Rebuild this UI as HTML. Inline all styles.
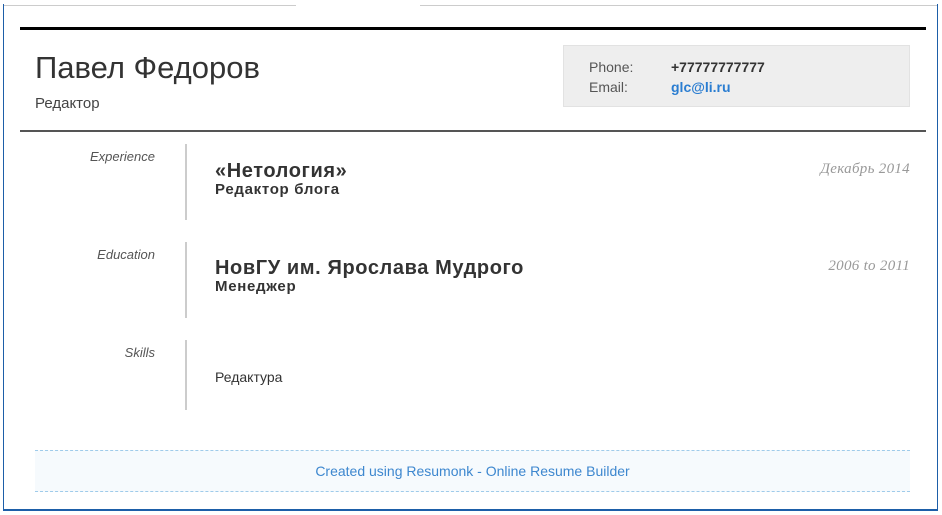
<!DOCTYPE html>
<html><head><meta charset="utf-8"><style>
*{margin:0;padding:0;box-sizing:border-box}
body{width:942px;height:515px;background:#fff;font-family:"Liberation Sans",sans-serif;position:relative;overflow:hidden}
.a{position:absolute;white-space:nowrap}
.frame{position:absolute;left:3px;top:4px;width:935px;height:507px;border-left:1px solid #1d5ea8;border-right:1px solid #1d5ea8;border-bottom:2px solid #1d5ea8}
.lab{font-style:italic;font-size:13px;color:#555;text-align:right;width:120px;left:35px}
.vl{position:absolute;left:185px;width:2px;background:#ccc}
.date{font-family:"Liberation Serif",serif;font-style:italic;font-size:15px;color:#999;right:32px;letter-spacing:0.3px}
.h{font-size:20px;font-weight:bold;color:#333;letter-spacing:0.6px}
.s{font-size:15px;font-weight:bold;color:#333;letter-spacing:0.7px}
</style></head><body>
<div class="frame"></div>
<div class="a" style="left:4px;top:5px;width:292px;height:1px;background:#ccc"></div>
<div class="a" style="left:420px;top:5px;width:517px;height:1px;background:#ccc"></div>
<div class="a" style="left:20px;top:27px;width:906px;height:3px;background:#000"></div>
<div class="a" style="left:35px;top:50px;font-size:31px;color:#333">Павел Федоров</div>
<div class="a" style="left:35px;top:95px;font-size:15px;color:#444">Редактор</div>
<div class="a" style="left:563px;top:45px;width:347px;height:62px;background:#eee;border:1px solid #e2e2e2"></div>
<div class="a" style="left:589px;top:59px;font-size:14px;color:#555">Phone:</div>
<div class="a" style="left:589px;top:79px;font-size:14px;color:#555">Email:</div>
<div class="a" style="left:671px;top:59px;font-size:14px;color:#333;font-weight:bold">+77777777777</div>
<div class="a" style="left:671px;top:79px;font-size:14px;color:#2a7dd1;font-weight:bold">glc@li.ru</div>
<div class="a" style="left:20px;top:130px;width:906px;height:2px;background:#555"></div>

<div class="a lab" style="top:149px">Experience</div>
<div class="vl" style="top:144px;height:76px"></div>
<div class="a h" style="left:215px;top:160px">«Нетология»</div>
<div class="a s" style="left:215px;top:181px">Редактор блога</div>
<div class="a date" style="top:161px">Декабрь 2014</div>

<div class="a lab" style="top:247px">Education</div>
<div class="vl" style="top:242px;height:76px"></div>
<div class="a h" style="left:215px;top:257px">НовГУ им. Ярослава Мудрого</div>
<div class="a s" style="left:215px;top:278px">Менеджер</div>
<div class="a date" style="top:258px">2006 to 2011</div>

<div class="a lab" style="top:345px">Skills</div>
<div class="vl" style="top:340px;height:70px"></div>
<div class="a" style="left:215px;top:369px;font-size:14px;color:#333">Редактура</div>

<div class="a" style="left:35px;top:450px;width:875px;height:42px;background:#f6fafd;border-top:1px dashed #9fcbea;border-bottom:1px dashed #9fcbea"></div>
<div class="a" style="left:35px;top:463px;width:875px;text-align:center;font-size:14px;color:#3d87cf">Created using Resumonk - Online Resume Builder</div>
</body></html>
